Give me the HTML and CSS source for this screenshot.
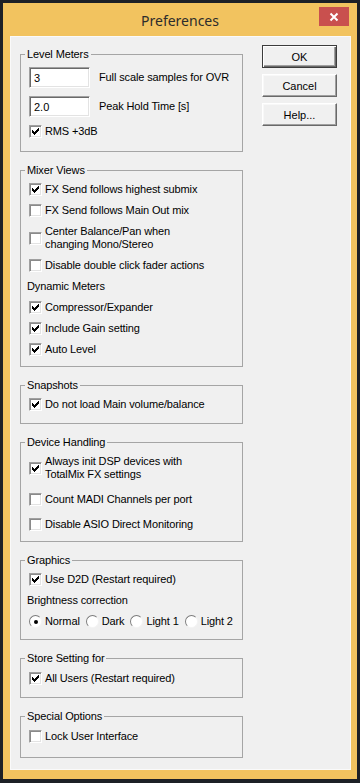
FILE: index.html
```html
<!DOCTYPE html>
<html lang="en">
  <head>
    <meta charset="utf-8" />
    <meta name="viewport" content="width=device-width, initial-scale=1.0" />
    <title>Preferences</title>
    <link rel="stylesheet" href="styles.css">
  </head>
  <body>
    <div class="window">
      <div class="titlebar">
        <span></span>
        <h1 class="title">Preferences</h1>
        <button class="close" aria-label="Close">
          <svg width="10" height="10" viewBox="0 0 10 10"><path d="M1.5 1.5l7 7M8.5 1.5l-7 7" stroke="#fff" stroke-width="2"/></svg>
        </button>
      </div>

      <div class="client">
        <div class="groups">
          <!-- Level Meters -->
          <fieldset class="group g-level">
            <legend>Level Meters</legend>
            <div class="items">
              <div class="field"><input class="num" type="text" value="3"><span>Full scale samples for OVR</span></div>
              <div class="field"><input class="num" type="text" value="2.0"><span>Peak Hold Time [s]</span></div>
              <label class="check"><span class="box on"><svg viewBox="0 0 11 11"><path d="M2 4h1v1h1v1h1v-1h1v-1h1v-1h1v-1h1v3h-1v1h-1v1h-1v1h-1v1h-1v-1h-1v-1h-1z"/></svg></span><span>RMS +3dB</span></label>
            </div>
          </fieldset>

          <!-- Mixer Views -->
          <fieldset class="group g-mixer">
            <legend>Mixer Views</legend>
            <div class="items">
              <label class="check"><span class="box on"><svg viewBox="0 0 11 11"><path d="M2 4h1v1h1v1h1v-1h1v-1h1v-1h1v-1h1v3h-1v1h-1v1h-1v1h-1v1h-1v-1h-1v-1h-1z"/></svg></span><span>FX Send follows highest submix</span></label>
              <label class="check"><span class="box"></span><span>FX Send follows Main Out mix</span></label>
              <label class="check"><span class="box"></span><span>Center Balance/Pan when<br>changing Mono/Stereo</span></label>
              <label class="check"><span class="box"></span><span>Disable double click fader actions</span></label>
              <div class="caption">Dynamic Meters</div>
              <label class="check"><span class="box on"><svg viewBox="0 0 11 11"><path d="M2 4h1v1h1v1h1v-1h1v-1h1v-1h1v-1h1v3h-1v1h-1v1h-1v1h-1v1h-1v-1h-1v-1h-1z"/></svg></span><span>Compressor/Expander</span></label>
              <label class="check"><span class="box on"><svg viewBox="0 0 11 11"><path d="M2 4h1v1h1v1h1v-1h1v-1h1v-1h1v-1h1v3h-1v1h-1v1h-1v1h-1v1h-1v-1h-1v-1h-1z"/></svg></span><span>Include Gain setting</span></label>
              <label class="check"><span class="box on"><svg viewBox="0 0 11 11"><path d="M2 4h1v1h1v1h1v-1h1v-1h1v-1h1v-1h1v3h-1v1h-1v1h-1v1h-1v1h-1v-1h-1v-1h-1z"/></svg></span><span>Auto Level</span></label>
            </div>
          </fieldset>

          <!-- Snapshots -->
          <fieldset class="group">
            <legend>Snapshots</legend>
            <div class="items">
              <label class="check"><span class="box on"><svg viewBox="0 0 11 11"><path d="M2 4h1v1h1v1h1v-1h1v-1h1v-1h1v-1h1v3h-1v1h-1v1h-1v1h-1v1h-1v-1h-1v-1h-1z"/></svg></span><span>Do not load Main volume/balance</span></label>
            </div>
          </fieldset>

          <!-- Device Handling -->
          <fieldset class="group g-device">
            <legend>Device Handling</legend>
            <div class="items">
              <label class="check"><span class="box on"><svg viewBox="0 0 11 11"><path d="M2 4h1v1h1v1h1v-1h1v-1h1v-1h1v-1h1v3h-1v1h-1v1h-1v1h-1v1h-1v-1h-1v-1h-1z"/></svg></span><span>Always init DSP devices with<br>TotalMix FX settings</span></label>
              <label class="check"><span class="box"></span><span>Count MADI Channels per port</span></label>
              <label class="check"><span class="box"></span><span>Disable ASIO Direct Monitoring</span></label>
            </div>
          </fieldset>

          <!-- Graphics -->
          <fieldset class="group g-graphics">
            <legend>Graphics</legend>
            <div class="items">
              <label class="check"><span class="box on"><svg viewBox="0 0 11 11"><path d="M2 4h1v1h1v1h1v-1h1v-1h1v-1h1v-1h1v3h-1v1h-1v1h-1v1h-1v1h-1v-1h-1v-1h-1z"/></svg></span><span>Use D2D (Restart required)</span></label>
              <div class="caption">Brightness correction</div>
              <div class="radios">
                <label class="radio"><span class="dot on"></span><span>Normal</span></label>
                <label class="radio"><span class="dot"></span><span>Dark</span></label>
                <label class="radio"><span class="dot"></span><span>Light 1</span></label>
                <label class="radio"><span class="dot"></span><span>Light 2</span></label>
              </div>
            </div>
          </fieldset>

          <!-- Store Setting for -->
          <fieldset class="group g-store">
            <legend>Store Setting for</legend>
            <div class="items">
              <label class="check"><span class="box on"><svg viewBox="0 0 11 11"><path d="M2 4h1v1h1v1h1v-1h1v-1h1v-1h1v-1h1v3h-1v1h-1v1h-1v1h-1v1h-1v-1h-1v-1h-1z"/></svg></span><span>All Users (Restart required)</span></label>
            </div>
          </fieldset>

          <!-- Special Options -->
          <fieldset class="group g-special">
            <legend>Special Options</legend>
            <div class="items">
              <label class="check"><span class="box"></span><span>Lock User Interface</span></label>
            </div>
          </fieldset>
        </div>

        <div class="buttons">
          <button class="btn default">OK</button>
          <button class="btn">Cancel</button>
          <button class="btn">Help...</button>
        </div>
      </div>
    </div>
  </body>
</html>
```

FILE: styles.css
```css
html,
body {
  margin: 0;
  height: 100%;
  overflow: hidden;
  background-color: #1d2026;
}

body {
  font-family: "Liberation Sans", Arial, sans-serif;
  font-size: 11px;
  letter-spacing: -0.12px;
  color: #000;
}

.window {
  margin: 3px 3px 4px 3px;
  height: 776px;
  background-color: #f2c35f;
  display: flex;
  flex-direction: column;
}

/* title bar */
.titlebar {
  flex: none;
  height: 33px;
  display: grid;
  grid-template-columns: 1fr auto 1fr;
  align-items: center;
}

.title {
  margin: 2px 0 0;
  font-family: "Noto Sans", "Open Sans", sans-serif;
  font-weight: 400;
  font-size: 14px;
  letter-spacing: 0;
  color: #2c2c2c;
}

.close {
  justify-self: end;
  align-self: start;
  margin: 4px 8px 0 0;
  width: 30px;
  height: 19px;
  padding: 0;
  border: 0;
  background-color: #c9504e;
  display: flex;
  align-items: center;
  justify-content: center;
}

/* client area */
.client {
  flex: 1;
  min-height: 0;
  overflow: hidden;
  margin: 0 6px 9px 7px;
  border: 1px solid #fafafa;
  background-color: #f0f0f0;
  display: flex;
  gap: 19px;
  padding: 0 13px 0 9px;
}

.groups {
  width: 223px;
  padding-top: 10px;
}

.group {
  margin: 0 0 11px;
  padding: 6px 8px 12px 8px;
  border: 1px solid #a5a5a5;
  min-inline-size: 0;
}

.group legend {
  padding: 0 2px;
  margin-left: -4px;
  line-height: 14px;
}

.g-level { padding-bottom: 13px; }
.g-mixer { padding-bottom: 10px; }
.g-device { padding-bottom: 10px; }
.g-graphics { padding-bottom: 11px; }
.g-store { padding-top: 7px; }
.g-special { padding-top: 7px; padding-bottom: 14px; }

.items {
  display: flex;
  flex-direction: column;
  gap: 8px;
  line-height: 13px;
}

.g-device .items { gap: 12px; }

.caption {
  margin-left: -2px;
}

/* edit boxes */
.field {
  display: flex;
  align-items: center;
  gap: 9px;
}

.num {
  box-sizing: border-box;
  width: 61px;
  height: 21px;
  margin: 0;
  padding: 0 4px;
  font: inherit;
  color: #000;
  background-color: #fff;
  border: 1px solid;
  border-color: #a0a0a0 #fff #fff #a0a0a0;
  box-shadow: inset 1px 1px 0 #696969, inset -1px -1px 0 #e3e3e3;
  outline: none;
}

/* checkboxes and radios */
.check,
.radio {
  display: flex;
  align-items: center;
  gap: 3px;
  white-space: nowrap;
}

.box {
  box-sizing: border-box;
  flex: none;
  width: 13px;
  height: 13px;
  background-color: #fff;
  border: 1px solid;
  border-color: #a0a0a0 #fff #fff #a0a0a0;
  box-shadow: inset 1px 1px 0 #8a8a8a, inset -1px -1px 0 #e3e3e3;
}

.box svg {
  display: block;
  width: 11px;
  height: 11px;
  fill: #000;
  shape-rendering: crispEdges;
}

.radios {
  display: flex;
  gap: 6px;
}

.dot {
  box-sizing: border-box;
  flex: none;
  width: 13px;
  height: 13px;
  border-radius: 50%;
  background-color: #fff;
  border: 1px solid;
  border-color: #7c7c7c #f4f4f4 #f4f4f4 #7c7c7c;
  display: flex;
  align-items: center;
  justify-content: center;
}

.dot.on::after {
  content: "";
  width: 4px;
  height: 4px;
  border-radius: 50%;
  background-color: #000;
}

/* dialog buttons */
.buttons {
  width: 75px;
  padding-top: 8px;
  display: flex;
  flex-direction: column;
  gap: 6px;
}

.btn {
  box-sizing: border-box;
  width: 75px;
  height: 23px;
  margin: 0;
  padding: 0;
  font: inherit;
  color: #000;
  background-color: #f0f0f0;
  border: 1px solid;
  border-color: #fff #696969 #696969 #fff;
  box-shadow: inset -1px -1px 0 #a0a0a0, inset 1px 1px 0 #f8f8f8;
}

.btn.default {
  border-color: #3c3c3c;
  box-shadow: inset 1px 1px 0 #fff, inset -1px -1px 0 #696969, inset -2px -2px 0 #a0a0a0;
}
```
